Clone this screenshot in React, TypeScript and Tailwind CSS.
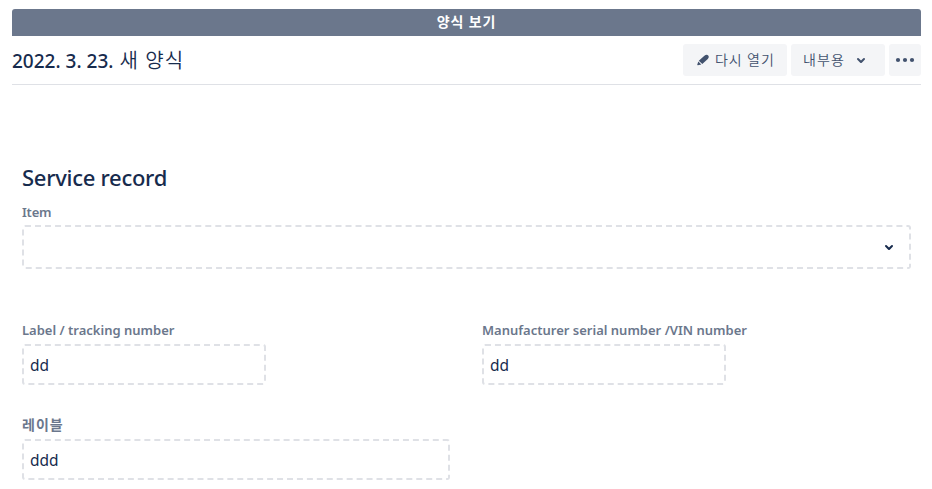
import type { ReactNode } from "react";

function Chevron() {
  return (
    <svg width="24" height="24" viewBox="0 0 24 24" fill="currentColor">
      <path d="M8.292 10.293a1.009 1.009 0 000 1.419l2.939 2.965c.218.215.5.322.779.322s.556-.107.769-.322l2.93-2.955a1.01 1.01 0 000-1.419.987.987 0 00-1.406 0l-2.298 2.317-2.307-2.327a.99.99 0 00-1.406 0z" />
    </svg>
  );
}

function Field({ label, className, children }: { label: ReactNode; className: string; children: ReactNode }) {
  return (
    <div className={className}>
      <div className="h-5 text-[13px] leading-5 font-semibold whitespace-nowrap text-[#6b778c]">{label}</div>
      <div className="mt-1 flex h-[41px] items-center rounded-[3px] border-2 border-dashed border-[#dfe1e6] px-1.5 pt-0.5 text-[15.5px]">
        {children}
      </div>
    </div>
  );
}

export default function App() {
  return (
    <div className="h-[489px] overflow-hidden bg-white pt-[9px] pr-[11px] pl-3 font-['Noto_Sans','Noto_Sans_CJK_KR',sans-serif] text-[#172b4d]">
      <div className="flex h-[27px] items-center justify-center rounded-t-[3px] bg-[#6b778c] pb-0.5 text-[14px] font-bold tracking-[0.9px] text-white">
        양식 보기
      </div>
      <header className="flex h-[49px] items-center justify-between border-b border-[#dfe1e6]">
        <h1 className="flex items-center text-[19px] leading-6 font-medium whitespace-nowrap">
          <span className="pt-0.5 pr-1.5 text-[19px]">2022. 3. 23.</span>
          <span className="pt-px text-[20px] font-[350] tracking-[1.1px]">새 양식</span>
        </h1>
        <div className="flex gap-1 text-sm font-[350] text-[#42526e]">
          <button className="flex h-8 w-[104px] items-center rounded-[3px] bg-[#f4f5f7] pl-2">
            <svg width="24" height="24" viewBox="0 0 24 24" fill="currentColor">
              <path d="M7.800 12.800l5.600-5c1.300-1.100 2.900-1.300 3.800-.4.900.9.700 2.400-.4 3.500l-5.500 5.200zM7.300 13.400l-1.000 3.000c-.2.500.1.900.6.800l3.400-.6z" />
            </svg>
            <span className="whitespace-nowrap pb-px tracking-[0.9px]">다시 열기</span>
          </button>
          <button className="flex h-8 w-[94px] items-center rounded-[3px] bg-[#f4f5f7] pl-3">
            <span className="w-[46px] whitespace-nowrap pb-px text-left tracking-[1.1px]">내부용</span>
            <Chevron />
          </button>
          <button className="flex size-8 items-center justify-center rounded-[3px] bg-[#f4f5f7]">
            <svg width="20" height="6" viewBox="0 0 20 6" fill="currentColor">
              <circle cx="3" cy="3" r="2.1" />
              <circle cx="10" cy="3" r="2.1" />
              <circle cx="17" cy="3" r="2.1" />
            </svg>
          </button>
        </div>
      </header>
      <main className="px-2.5 pt-[78px]">
        <h2 className="h-[29px] text-[22px] leading-7 font-medium tracking-[-0.28px]">Service record</h2>
        <div className="mt-2.5 h-5 text-[13px] leading-5 font-semibold tracking-[-0.2px] text-[#6b778c]">Item</div>
        <div className="mt-[3px] flex h-11 items-center justify-end rounded-[3px] border-2 border-dashed border-[#dfe1e6] pr-2">
          <Chevron />
        </div>
        <div className="mt-[51px] flex">
          <Field label="Label / tracking number" className="w-[244px]">dd</Field>
          <Field label="Manufacturer serial number /VIN number" className="ml-[216px] w-[244px]">dd</Field>
        </div>
        <Field label={<span className="text-sm leading-5 tracking-[1px]">레이블</span>} className="mt-[30px] w-[428px]">ddd</Field>
      </main>
    </div>
  );
}
